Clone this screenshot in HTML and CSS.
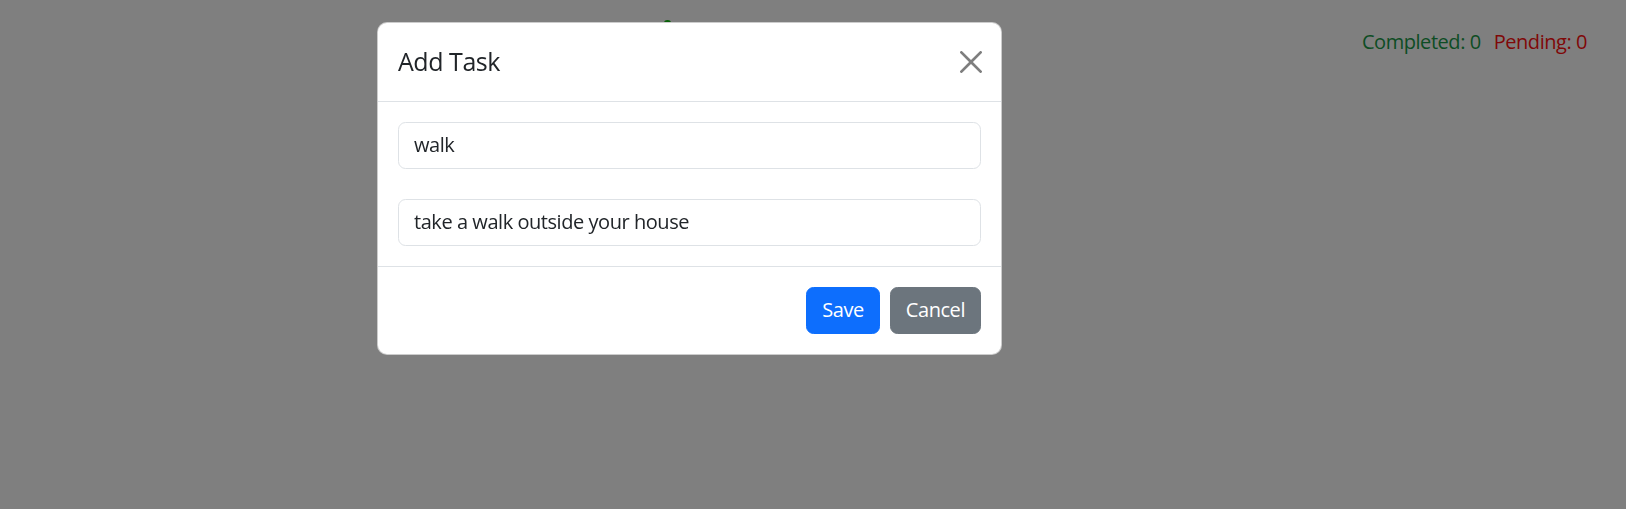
FILE: index.html
```html
<!DOCTYPE html>
<html lang="en">
<head>
<meta charset="utf-8">
<title>Tasks</title>
<link rel="stylesheet" href="styles.css">
</head>
<body>
  <header class="topbar">
    <div class="stats">
      <span class="stat stat-done">Completed: 0</span>
      <span class="stat stat-pending">Pending: 0</span>
    </div>
  </header>
  <div class="peek"></div>

  <div class="backdrop"></div>

  <div class="modal">
    <div class="modal-header">
      <h5 class="modal-title">Add Task</h5>
      <button class="btn-close" type="button" aria-label="Close">
        <svg viewBox="0 0 16 16" width="22" height="22" aria-hidden="true">
          <path d="M.293.293a1 1 0 0 1 1.414 0L8 6.586 14.293.293a1 1 0 1 1 1.414 1.414L9.414 8l6.293 6.293a1 1 0 0 1-1.414 1.414L8 9.414l-6.293 6.293a1 1 0 0 1-1.414-1.414L6.586 8 .293 1.707a1 1 0 0 1 0-1.414z"/>
        </svg>
      </button>
    </div>
    <div class="modal-body">
      <input class="form-control" type="text" value="walk">
      <input class="form-control" type="text" value="take a walk outside your house">
    </div>
    <div class="modal-footer">
      <button class="btn btn-primary" type="button">Save</button>
      <button class="btn btn-secondary" type="button">Cancel</button>
    </div>
  </div>
</body>
</html>
```

FILE: styles.css
```css
* { box-sizing: border-box; }

html, body {
  margin: 0;
  height: 100%;
}

body {
  background: #ffffff;
  font-family: "Open Sans", "Noto Sans", "Liberation Sans", sans-serif;
  letter-spacing: -0.45px;
  color: #212529;
  overflow: hidden;
}

.topbar {
  display: flex;
  justify-content: flex-end;
  padding: 27px 39px 0 0;
}

.stats {
  display: flex;
  gap: 13px;
  font-size: 20px;
  line-height: 30px;
}

.stat-done { color: #1a9a48; }
.stat-pending { color: #ff1010; }

.peek {
  position: absolute;
  left: 664px;
  top: 20px;
  width: 7px;
  height: 6px;
  border-radius: 50%;
  background: #10c010;
}

.backdrop {
  position: fixed;
  inset: 0;
  background: rgba(0, 0, 0, 0.5);
}

.modal {
  position: fixed;
  left: 377px;
  top: 22px;
  width: 625px;
  background: #fff;
  border: 1px solid rgba(0, 0, 0, 0.2);
  border-radius: 10px;
  display: flex;
  flex-direction: column;
}

.modal-header {
  display: flex;
  align-items: center;
  justify-content: space-between;
  padding: 20px;
  border-bottom: 1px solid #dee2e6;
}

.modal-title {
  margin: 0;
  font-size: 25px;
  line-height: 37.5px;
  font-weight: 500;
  color: #212529;
}

.btn-close {
  border: 0;
  background: transparent;
  padding: 0;
  margin-right: -1px;
  width: 22px;
  height: 22px;
  display: flex;
  opacity: 0.5;
  cursor: pointer;
}

.btn-close svg { fill: #000; }

.modal-body {
  display: flex;
  flex-direction: column;
  gap: 30px;
  padding: 20px;
}

.form-control {
  display: block;
  width: 100%;
  font: inherit;
  font-size: 20px;
  line-height: 30px;
  letter-spacing: -0.45px;
  padding: 7.5px 15px;
  color: #212529;
  background: #fff;
  border: 1px solid #dee2e6;
  border-radius: 7.5px;
  outline: none;
}

.modal-footer {
  display: flex;
  justify-content: flex-end;
  padding: 15px;
  border-top: 1px solid #dee2e6;
}

.btn {
  margin: 5px;
  font: inherit;
  font-size: 20px;
  line-height: 30px;
  letter-spacing: -0.45px;
  padding: 7.5px 15px;
  border: 1px solid transparent;
  border-radius: 7.5px;
  color: #fff;
  cursor: pointer;
}

.btn-primary { background: #0d6efd; border-color: #0d6efd; }
.btn-secondary { background: #6c757d; border-color: #6c757d; }
```
